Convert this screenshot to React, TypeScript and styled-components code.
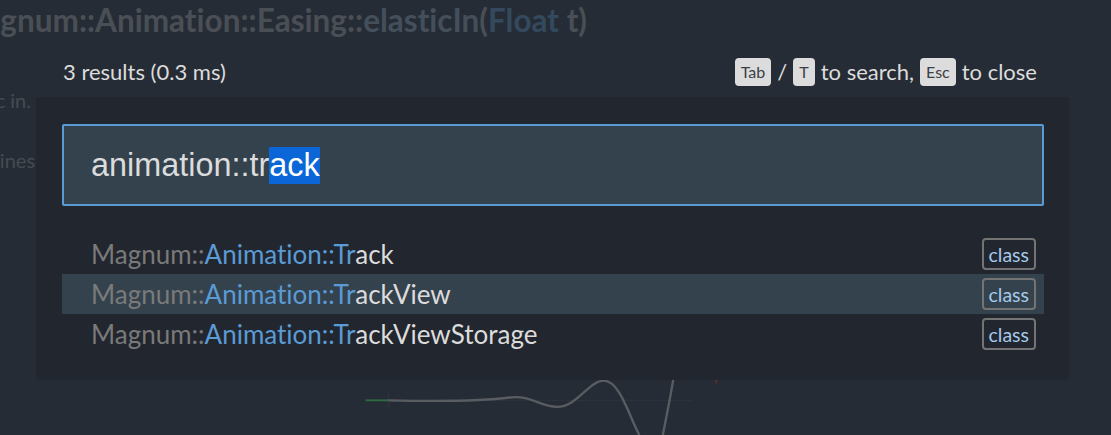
import React from "react";
import styled, { createGlobalStyle } from "styled-components";

const Global = createGlobalStyle`
  html, body { margin: 0; padding: 0; }
  body {
    background: #262c35;
    width: 1111px;
    height: 435px;
    overflow: hidden;
    font-family: "Lato", "Open Sans", sans-serif;
    font-variant-ligatures: none;
  }
`;

const Page = styled.main`
  position: relative;
  width: 1111px;
  height: 435px;
  overflow: hidden;
  display: flex;
  flex-direction: column;
`;

const Title = styled.h1`
  margin: 0 0 0 -45px;
  font-size: 31.5px;
  line-height: 40px;
  font-weight: 700;
  white-space: nowrap;
  color: #4a4f56;
`;

const TitleFn = styled.span`
  color: #434f5b;
`;

const TitleType = styled.span`
  color: #33495e;
`;

const EndLine = styled.p`
  margin: 48px 0 0 0;
  width: 31px;
  display: flex;
  justify-content: flex-end;
  font-size: 20px;
  line-height: 24px;
  color: #464b52;
  white-space: nowrap;
`;

const BodyText = styled.p<{ $shift: number; $top: number }>`
  margin: ${(p) => p.$top}px 0 0 ${(p) => p.$shift}px;
  font-size: 20px;
  line-height: 24px;
  color: #464b52;
  white-space: nowrap;
`;

const Chart = styled.svg`
  display: block;
  margin: 188px 0 0 340px;
`;

const Overlay = styled.div`
  position: absolute;
  inset: 0;
  padding-top: 57px;
  display: flex;
  flex-direction: column;
`;

const Header = styled.div`
  display: flex;
  align-items: center;
  justify-content: space-between;
  height: 29px;
  margin: 0 74px 0 63px;
  color: #dcdcdc;
  font-size: 22px;
`;

const Hints = styled.div`
  display: flex;
  align-items: center;
  gap: 6px;
`;

const Kbd = styled.kbd`
  display: inline-flex;
  align-items: center;
  justify-content: center;
  height: 28px;
  padding: 0 6px;
  border-radius: 4px;
  background: #dcdcdc;
  color: #3a3f46;
  font-family: "Lato", sans-serif;
  font-size: 16px;
`;

const Panel = styled.section`
  margin: 11px 0 0 36px;
  width: 1033px;
  box-sizing: border-box;
  padding: 27px 25px 26px 26px;
  background: #22262e;
  border-radius: 0 0 4px 4px;
`;

const SearchBox = styled.div`
  height: 82px;
  box-sizing: border-box;
  border: 2px solid #5b9bd5;
  border-radius: 2px;
  background: #34424e;
  display: flex;
  align-items: center;
  padding-left: 27px;
  font-family: "Liberation Sans", Arial, sans-serif;
  font-size: 32.4px;
  color: #dcdcdc;
`;

const Selected = styled.span`
  background: #0b67d8;
  color: #ffffff;
  line-height: 37px;
`;

const Results = styled.ul`
  list-style: none;
  margin: 28px 0 0 0;
  padding: 0;
`;

const Row = styled.li<{ $active?: boolean }>`
  height: 40px;
  display: flex;
  align-items: center;
  justify-content: space-between;
  padding: 0 8px 0 29px;
  background: ${(p) => (p.$active ? "#34424e" : "transparent")};
  font-size: 26px;
`;

const Scope = styled.span`
  color: #7a7a7a;
`;
const Match = styled.span`
  color: #5b9bd5;
`;
const Rest = styled.span`
  color: #dcdcdc;
`;

const Badge = styled.span`
  display: inline-flex;
  align-items: center;
  height: 32px;
  box-sizing: border-box;
  padding: 0 5px;
  border: 2px solid #747474;
  border-radius: 4px;
  color: #a5c9ea;
  font-size: 19.5px;
`;

const results = [
  { rest: "ack", active: false },
  { rest: "ackView", active: true },
  { rest: "ackViewStorage", active: false },
];

export default function App() {
  return (
    <>
      <Global />
      <Page>
        <Title>
          Magnum::Animation::Easing::<TitleFn>elasticIn</TitleFn>(
          <TitleType>Float</TitleType> t)
        </Title>
        <EndLine>Starts elastic in.</EndLine>
        <BodyText $shift={-57} $top={36}>
          Guidelines for the function
        </BodyText>
        <Chart width="400" height="80" viewBox="340 360 400 80">
          <line x1="378" y1="403" x2="703" y2="403" stroke="#2e353f" strokeWidth="1" />
          <line x1="378" y1="393" x2="378" y2="413" stroke="#2e353f" strokeWidth="1" />
          <line x1="354" y1="403" x2="378" y2="403" stroke="#2f6a42" strokeWidth="2" />
          <path
            d="M378 403 C 420 404, 470 405, 508 400 C 530 397, 540 410, 558 410 C 580 410, 592 382, 608 382 C 625 382, 635 420, 646 440"
            fill="none"
            stroke="#595d62"
            strokeWidth="2.5"
          />
          <path d="M683 376 C 679 400, 675 420, 671 440" fill="none" stroke="#595d62" strokeWidth="2.5" />
          <line x1="728" y1="380" x2="728" y2="385" stroke="#6a2a2a" strokeWidth="2" />
        </Chart>
        <Overlay>
          <Header>
            <span>3 results (0.3 ms)</span>
            <Hints>
              <Kbd>Tab</Kbd>
              <span>/</span>
              <Kbd>T</Kbd>
              <span>to search,</span>
              <Kbd>Esc</Kbd>
              <span>to close</span>
            </Hints>
          </Header>
          <Panel>
            <SearchBox>
              animation::tr<Selected>ack</Selected>
            </SearchBox>
            <Results>
              {results.map((r) => (
                <Row key={r.rest} $active={r.active}>
                  <span>
                    <Scope>Magnum::</Scope>
                    <Match>Animation::Tr</Match>
                    <Rest>{r.rest}</Rest>
                  </span>
                  <Badge>class</Badge>
                </Row>
              ))}
            </Results>
          </Panel>
        </Overlay>
      </Page>
    </>
  );
}
